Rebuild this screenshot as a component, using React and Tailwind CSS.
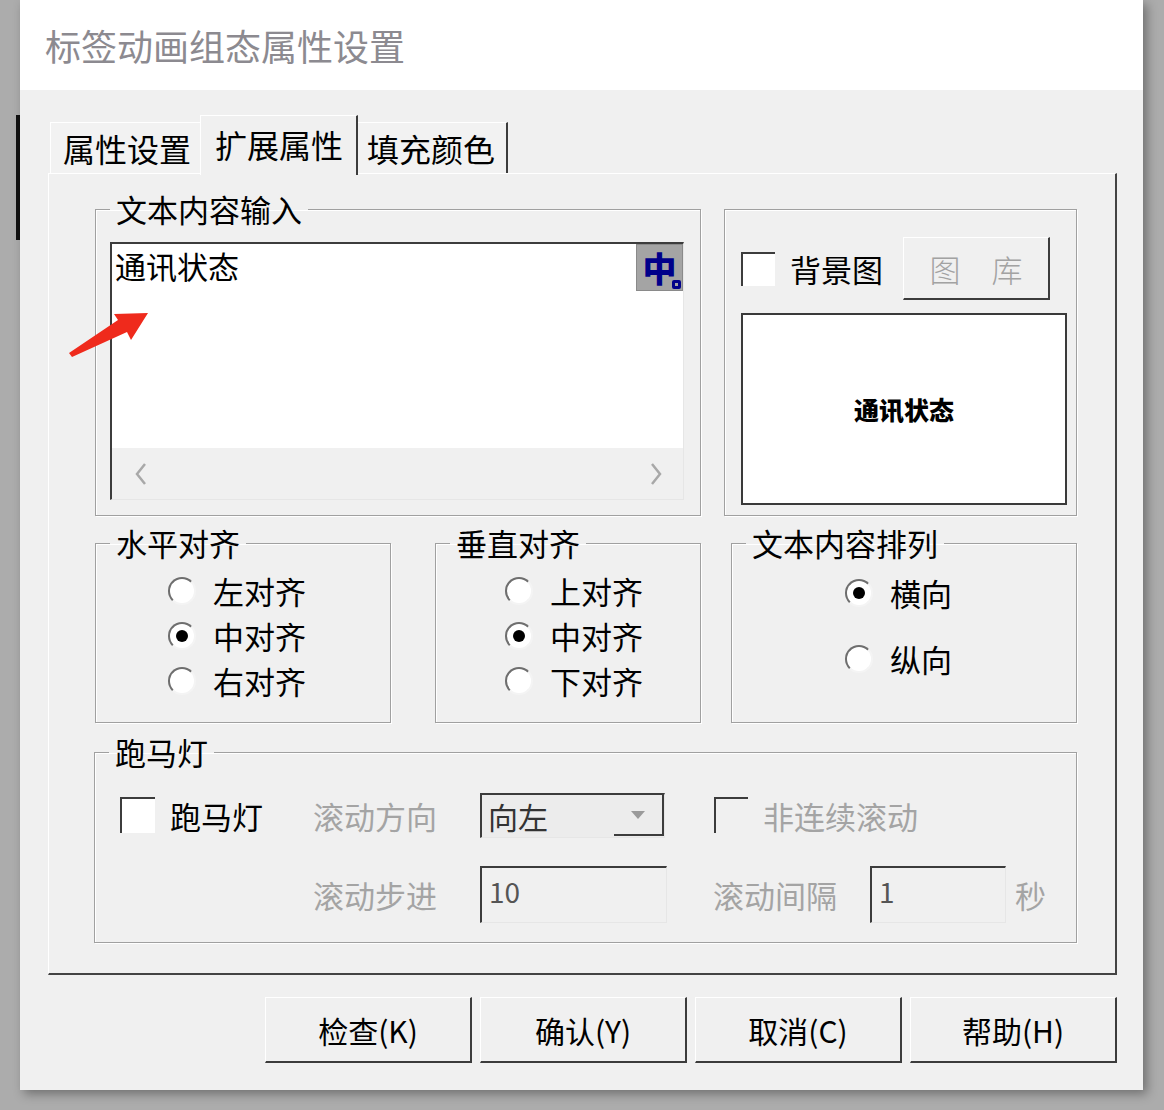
import React from "react";

const sunken = "border-t-2 border-l-2 border-r border-b border-t-[#3c3c3c] border-l-[#3c3c3c] border-r-[#e6e6e6] border-b-[#e6e6e6]";
const raised = "border-t border-l border-r-2 border-b-2 border-t-white border-l-white border-r-[#3c3c3c] border-b-[#3c3c3c]";
const groupBox = "border border-[#a0a0a0] shadow-[inset_1px_1px_0_#fff,1px_1px_0_#fff]";

const Radio = ({ checked, label }) => (
  <div className="flex items-center gap-[17px] h-[45px]">
    <span className="w-[28px] h-[28px] rounded-full bg-white border-2 border-t-[#6e6e6e] border-l-[#6e6e6e] border-r-[#f4f4f4] border-b-[#f4f4f4] flex items-center justify-center">
      {checked && <span className="w-[12px] h-[12px] rounded-full bg-black" />}
    </span>
    <span className="text-[31px] leading-none text-black">{label}</span>
  </div>
);

const Legend = ({ children }) => (
  <legend className="ml-[14px] px-[6px] text-[31px] leading-[36px] text-black">{children}</legend>
);

const Chevron = ({ dir }) => (
  <svg width="14" height="24" viewBox="0 0 14 24">
    <polyline
      points={dir === "left" ? "11,2 3,12 11,22" : "3,2 11,12 3,22"}
      fill="none"
      stroke="#a8a8a8"
      strokeWidth="2.5"
    />
  </svg>
);

const App = () => {
  return (
    <div className="relative w-[1164px] h-[1110px] bg-[#acacac] flex overflow-hidden font-['Noto_Sans_CJK_SC',sans-serif]">
      {/* background window edge */}
      <div className="w-[20px] shrink-0">
        <div className="mt-[115px] ml-[16px] w-[5px] h-[125px] bg-[#111]" />
      </div>

      <div className="w-[1123px] h-[1090px] flex flex-col bg-[#f0f0f0] shadow-[4px_4px_10px_rgba(0,0,0,0.35)]">
        <div className="h-[90px] bg-white flex items-center pl-[25px] text-[36px] text-[#8c8a90] leading-none">
          标签动画组态属性设置
        </div>

        <div className="flex-1 pl-[28px] pr-[26px] pt-[25px]">
          {/* tabs */}
          <div className="flex items-end h-[58px] pl-[2px] text-[32px] leading-none text-black">
            <div className="w-[150px] h-[51px] border-t border-l border-white bg-[#f2f2f2] flex items-center pl-[12px]">
              属性设置
            </div>
            <div className="relative z-10 -mb-[2px] w-[158px] h-[60px] border-t border-l border-white border-r-2 border-r-[#3c3c3c] bg-[#f0f0f0] flex items-start pt-[12px] pl-[14px]">
              扩展属性
            </div>
            <div className="w-[150px] h-[51px] border-t border-white border-r-2 border-r-[#3c3c3c] bg-[#f2f2f2] flex items-center pl-[9px]">
              填充颜色
            </div>
          </div>

          {/* tab panel */}
          <div className="h-[802px] border-t border-l border-white border-r-2 border-b-2 border-r-[#444] border-b-[#444] pl-[46px] pt-[17px]">
            <div className="flex items-end">
              <fieldset className={`${groupBox} w-[606px] h-[325px]`}>
                <Legend>文本内容输入</Legend>
                <div className="pl-[14px] pr-[16px] pt-[15px]">
                  <div className={`${sunken} relative h-[258px] flex flex-col`}>
                    <div className="flex-1 bg-white px-[3px] pt-[2px] text-[31px] leading-[40px] text-black">
                      通讯状态
                    </div>
                    <div className="absolute top-0 right-0 w-[47px] h-[47px] bg-[#a4a4a4] border border-[#8a8a8a] flex items-center justify-center">
                      <span className="text-[34px] leading-none font-black text-[#00008a]">中</span>
                      <span className="absolute right-[1px] bottom-[1px] w-[9px] h-[9px] border-[3px] border-[#00008a] rounded-[2px]" />
                    </div>
                    <div className="h-[51px] bg-[#f0f0f0] flex items-center justify-between pl-[22px] pr-[20px]">
                      <Chevron dir="left" />
                      <Chevron dir="right" />
                    </div>
                  </div>
                </div>
              </fieldset>

              <fieldset className={`${groupBox} ml-[23px] w-[353px] h-[307px]`}>
                <div className="pl-[16px] pt-[27px]">
                  <div className="flex items-center h-[63px]">
                    <span className="w-[34px] h-[34px] bg-white border-t-2 border-l-2 border-[#3c3c3c] border-r-0 border-b-0" />
                    <span className="ml-[15px] text-[31px] leading-none text-black">背景图</span>
                    <div className={`${raised} ml-[20px] w-[147px] h-[63px] flex items-center justify-center text-[31px] leading-none text-[#a2a2a2] font-light`}>
                      图　库
                    </div>
                  </div>
                  <div className="mt-[13px] w-[326px] h-[192px] border-2 border-[#3a3a3a] bg-white flex items-center justify-center">
                    <span className="text-[25px] leading-none font-black text-black">通讯状态</span>
                  </div>
                </div>
              </fieldset>
            </div>

            <div className="flex mt-[9px]">
              <fieldset className={`${groupBox} w-[296px] h-[198px]`}>
                <Legend>水平对齐</Legend>
                <div className="pl-[72px] pt-[7px]">
                  <Radio label="左对齐" />
                  <Radio label="中对齐" checked />
                  <Radio label="右对齐" />
                </div>
              </fieldset>
              <fieldset className={`${groupBox} ml-[44px] w-[266px] h-[198px]`}>
                <Legend>垂直对齐</Legend>
                <div className="pl-[69px] pt-[7px]">
                  <Radio label="上对齐" />
                  <Radio label="中对齐" checked />
                  <Radio label="下对齐" />
                </div>
              </fieldset>
              <fieldset className={`${groupBox} ml-[30px] w-[346px] h-[198px]`}>
                <Legend>文本内容排列</Legend>
                <div className="pl-[113px] pt-[9px] flex flex-col gap-[21px]">
                  <Radio label="横向" checked />
                  <Radio label="纵向" />
                </div>
              </fieldset>
            </div>

            <fieldset className={`${groupBox} mt-[11px] -ml-[1px] w-[983px] h-[209px]`}>
              <Legend>跑马灯</Legend>
              <div className="pl-[25px] pt-[22px] text-[31px] leading-none">
                <div className="flex items-center h-[46px]">
                  <span className="w-[35px] h-[36px] bg-white border-t-2 border-l-2 border-[#3c3c3c] border-r-0 border-b-0" />
                  <span className="ml-[15px] text-black">跑马灯</span>
                  <span className="ml-[50px] text-[#a4a4a4]">滚动方向</span>
                  <div className={`${sunken} ml-[43px] w-[185px] h-[45px] bg-[#ececec] flex items-center`}>
                    <span className="pl-[6px] flex-1 text-[30px] text-[#333]">向左</span>
                    <span className="w-[50px] h-[41px] border-r-2 border-b-2 border-[#3c3c3c] flex items-center justify-center">
                      <svg width="16" height="10" viewBox="0 0 16 10">
                        <polygon points="1,1 15,1 8,9" fill="#9a9a9a" />
                      </svg>
                    </span>
                  </div>
                  <span className="ml-[49px] w-[34px] h-[36px] bg-[#f0f0f0] border-t-2 border-l-2 border-[#3c3c3c] border-r-0 border-b-0" />
                  <span className="ml-[15px] text-[#a4a4a4]">非连续滚动</span>
                </div>
                <div className="flex items-center mt-[28px]">
                  <span className="ml-[193px] text-[#a4a4a4]">滚动步进</span>
                  <div className={`${sunken} ml-[43px] w-[187px] h-[57px] bg-[#f0f0f0] flex items-center pl-[7px] pb-[8px] text-[28px] text-[#555]`}>
                    10
                  </div>
                  <span className="ml-[46px] text-[#a4a4a4]">滚动间隔</span>
                  <div className={`${sunken} ml-[33px] w-[136px] h-[57px] bg-[#f0f0f0] flex items-center pl-[7px] pb-[8px] text-[28px] text-[#555]`}>
                    1
                  </div>
                  <span className="ml-[9px] text-[#a4a4a4]">秒</span>
                </div>
              </div>
            </fieldset>
          </div>

          {/* buttons */}
          <div className="flex justify-end gap-[8px] mt-[22px]">
            {["检查(K)", "确认(Y)", "取消(C)", "帮助(H)"].map((t) => (
              <div key={t} className={`${raised} w-[207px] h-[66px] flex items-center justify-center text-[30px] leading-none text-black`}>
                {t}
              </div>
            ))}
          </div>
        </div>
      </div>

      {/* red pointer arrow */}
      <svg className="absolute left-[60px] top-[300px]" width="100" height="65" viewBox="0 0 100 65">
        <polygon points="9,53 58,20 54,14 88,13 71,40 67,32 12,57" fill="#ef2a1c" />
      </svg>
    </div>
  );
};

export default App;
